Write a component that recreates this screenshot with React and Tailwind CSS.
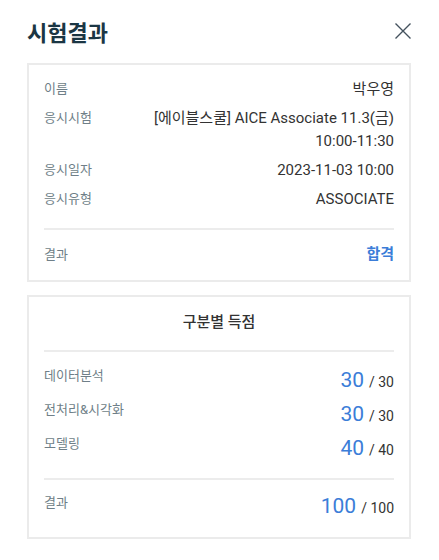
import { useState } from 'react';

const info = [
  { label: '이름', value: '박우영' },
  { label: '응시시험', value: '[에이블스쿨] AICE Associate 11.3(금) 10:00-11:30' },
  { label: '응시일자', value: '2023-11-03 10:00' },
  { label: '응시유형', value: 'ASSOCIATE' }
];

const scores = [
  { label: '데이터분석', score: 30, total: 30 },
  { label: '전처리&시각화', score: 30, total: 30 },
  { label: '모델링', score: 40, total: 40 }
];

const fontStack = { fontFamily: "Roboto, 'Noto Sans CJK KR', sans-serif" };

function CloseIcon() {
  return (
    <svg width="18" height="18" viewBox="0 0 18 18" fill="none">
      <path d="M1.5 1.5L16.5 16.5M16.5 1.5L1.5 16.5" stroke="#44525e" strokeWidth="1.4" />
    </svg>
  );
}

function ScoreValue({ score, total }) {
  return (
    <div className="flex items-baseline gap-[5px]">
      <span className="text-[21px] leading-[28px] text-[#3b7dd8]">{score}</span>
      <span className="text-[14px] text-[#333]">/ {total}</span>
    </div>
  );
}

export default function App() {
  const [open, setOpen] = useState(true);

  if (!open) {
    return null;
  }

  return (
    <div className="min-h-[560px] w-[439px] bg-white pl-[27px] pr-[28px] pt-[17px]" style={fontStack}>
      <div className="flex h-[28px] items-center justify-between">
        <h1
          className="text-[22px] font-bold text-[#1b3644]"
          style={{ fontFamily: "'Noto Sans CJK KR', sans-serif" }}
        >
          시험결과
        </h1>
        <button type="button" className="mr-[-1px]" onClick={() => setOpen(false)} aria-label="닫기">
          <CloseIcon />
        </button>
      </div>

      <section className="mt-[18px] border-2 border-[#ebebeb] px-[15px] pb-[14px] pt-[13px]">
        <div className="flex flex-col gap-[6px]">
          {info.map((row) => (
            <div key={row.label} className="flex items-start justify-between gap-4">
              <span className="shrink-0 text-[13px] leading-[22px] text-[#6f7f88]">{row.label}</span>
              <span className="max-w-[250px] text-right text-[15px] leading-[23px] text-[#333]">{row.value}</span>
            </div>
          ))}
        </div>
        <div className="mt-[17px] h-[2px] bg-[#ececec]" />
        <div className="mt-[13px] flex items-start justify-between">
          <span className="text-[13px] leading-[23px] text-[#6f7f88]">결과</span>
          <span className="text-[15px] font-bold leading-[23px] text-[#3b7dd8]">합격</span>
        </div>
      </section>

      <section className="mt-[13px] border-2 border-[#ebebeb] px-[15px] pb-[17px] pt-[14px]">
        <h2 className="text-center text-[15px] font-medium leading-[22px] text-[#333]">구분별 득점</h2>
        <div className="mt-[17px] h-[2px] bg-[#ececec]" />
        <div className="mt-[14px] flex flex-col gap-[6px]">
          {scores.map((row) => (
            <div key={row.label} className="flex items-start justify-between">
              <span className="text-[13px] leading-[20px] text-[#6f7f88]">{row.label}</span>
              <ScoreValue score={row.score} total={row.total} />
            </div>
          ))}
        </div>
        <div className="mt-[16px] h-[2px] bg-[#ececec]" />
        <div className="mt-[12px] flex items-start justify-between">
          <span className="text-[13px] leading-[22px] text-[#6f7f88]">결과</span>
          <ScoreValue score={100} total={100} />
        </div>
      </section>
    </div>
  );
}
